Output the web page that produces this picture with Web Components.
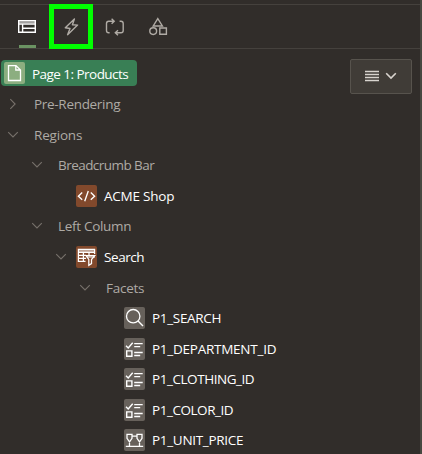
<!DOCTYPE html>
<html lang="en"><head><meta charset="utf-8"><title>Page Designer</title>
<style>html,body{margin:0;background:#312d2a;overflow:hidden}</style></head><body>
<page-panel></page-panel>
<script>
const S='fill="none" stroke="currentColor"';
const ICONS={
 layout:[18,13,`<path ${S} d="M.7 .7h16.6v11.6H.7z M.7 4h16.6 M4.6 4v8 M4.6 8.2h12.5" stroke-width="1.4"/><path ${S} d="M1 2.3h16" stroke-width="1.4" opacity=".55"/>`],
 bolt:[15,18,`<path ${S} stroke-width="1.4" stroke-linejoin="round" d="M10.4 1 1.3 9.8 6 10.5 3.6 16.7 13.6 7.1 8.4 6.8Z"/>`],
 cycle:[20,18,`<path ${S} stroke-width="1.4" d="M4.6 14.8H3.7Q1.5 14.8 1.5 12.6V5.4Q1.5 3.2 3.7 3.2H9 M6.6 .8 9.2 3.2 6.6 5.7 M14.6 3.2H16Q18.2 3.2 18.2 5.4V12.6Q18.2 14.8 16 14.8H10.4 M13 12.3 10.3 14.8 13 17.2"/>`],
 shapes:[20,19,`<path ${S} stroke-width="1.4" d="M8.8 1.6 13.4 9H4.2Z M10.8 11h6.6v6.3h-6.6Z"/><circle ${S} stroke-width="1.4" cx="4.2" cy="14.1" r="3.4"/>`],
 lines:[14,12,`<path ${S} stroke-width="1.4" d="M0 1.5h14M0 4.5h14M0 7.5h14M0 10.5h14"/>`],
 down:[12,8,`<path ${S} stroke-width="var(--sw,1.1)" d="M1.2 1.2 6 6 10.8 1.2"/>`],
 right:[8,12,`<path ${S} stroke-width="1.1" d="M1.3 1.2 6.1 6 1.3 10.8"/>`],
 page:[21,22,`<path ${S} stroke-width="1.3" d="M4.5 3.6h7.5L16.5 8v10.5h-12Z M11.8 3.6V8h4.7"/>`],
 code:[21,22,`<path ${S} stroke-width="1.35" d="M6.2 7.6 2.4 11.2 6.2 14.8 M14.8 7.6 18.6 11.2 14.8 14.8 M12.3 6 8.7 16.3"/>`],
 faceted:[21,22,`<path fill="currentColor" opacity=".5" d="M2 3h17v3H2zM10 9h9v3h-8z"/><path ${S} stroke-width="1.25" d="M9.5 15.4H2.4V3.4H18.6V8 M2.4 6.3H18.6 M2.4 9.3H10 M2.4 12.4H10 M7.4 6.3V15 M13 6.3V9 M10 9.6H18.7L15.5 13.5V17.6L12.8 19.3V13.5Z"/>`],
 search:[21,22,`<circle ${S} stroke-width="1.3" cx="9.2" cy="9.2" r="6.7"/><path ${S} stroke-width="1.4" d="M13.8 13.8 19 19"/>`],
 checks:[21,22,`<path ${S} stroke-width="1.4" d="M2 7.8 4.2 10 8.7 4.8 M10.2 5.6h8.5M10.2 8.6h6 M2.7 12.9h5.2v5.4H2.7Z M10.2 14.5h8.5M10.2 17.5h6"/>`],
 range:[21,22,`<path ${S} stroke-width="1.3" d="M3 5.3H8V9.4L5.5 12.8 3 9.4Z M13 5.3H18V9.4L15.5 12.8 13 9.4Z M8 7.2h5 M1.8 17.4H19.2 M5.5 12.8v4.6 M15.5 12.8v4.6"/>`]
};
function define(name,css,html,after){
 const t=document.createElement('template');
 customElements.define(name,class extends HTMLElement{
  connectedCallback(){if(this.shadowRoot)return;
   t.innerHTML=`<style>${css}</style>${typeof html==='function'?html(this):html}`;
   this.attachShadow({mode:'open'}).append(t.content.cloneNode(true));
   if(after)after(this);}
 });
}
define('ui-icon',':host{display:block;flex:none;line-height:0}svg{display:block}',e=>{
 const [w,h,p]=ICONS[e.getAttribute('name')];
 return `<svg width="${w}" height="${h}" viewBox="0 0 ${w} ${h}">${p}</svg>`;});
define('icon-tile',`:host{display:block;flex:none;width:21px;height:22px;border-radius:2px;color:#fff;background:#67615b}
:host([tone=rust]){background:#82492c}:host([tone=green]){background:#8cae80}`,
 e=>`<ui-icon name="${e.getAttribute('icon')}"></ui-icon>`);
/* Label whose letter-spacing is adjusted so the text takes the width in "fit". */
define('tree-label',':host{display:block;white-space:nowrap;font:13.5px/20px "Open Sans","Noto Sans",sans-serif}span{display:inline-block}','<span><slot></slot></span>',e=>{
 const s=e.shadowRoot.querySelector('span'),n=e.textContent.length;
 s.style.letterSpacing=((+e.getAttribute('fit')+.2-s.getBoundingClientRect().width)/n)+'px';});
define('tree-row',`:host{display:flex;align-items:center;height:30.55px;color:#aeaaa5;box-sizing:border-box}
:host([strong]){color:#fff}.t{flex:none;width:24px;display:flex;justify-content:center;color:#77716b}
icon-tile{margin-left:3px;margin-right:7px}.gap{width:9px;flex:none}`,e=>{
 const a=n=>e.getAttribute(n);
 return `<style>:host{padding-left:${a('level')*24+1}px}</style><div class="t">${a('open')?`<ui-icon name="${a('open')}"></ui-icon>`:''}</div>${a('icon')?`<icon-tile icon="${a('icon')}" tone="${a('tone')||''}"></icon-tile>`:'<div class="gap"></div>'}<tree-label fit="${a('fit')}">${a('label')}</tree-label>`;});
define('root-chip',`:host{display:flex;align-items:center;height:30.5px;padding-left:1px}
div{display:flex;align-items:center;box-sizing:border-box;width:136px;height:26px;padding-left:3px;gap:7px;border-radius:4px;background:#397f55;color:#fff;margin-top:-1px}tree-label{padding-top:1px}`,
 '<div><icon-tile icon="page" tone="green"></icon-tile><tree-label fit="96">Page 1: Products</tree-label></div>');
define('menu-button',`:host{display:flex;align-items:center;justify-content:center;gap:6px;box-sizing:border-box;width:62px;height:35px;border:1px solid #57534d;border-radius:2px;background:#403c37;color:#d8d4ce;--sw:1.6}`,
 '<ui-icon name="lines"></ui-icon><ui-icon name="down"></ui-icon>');
define('tab-item',`:host{display:flex;box-sizing:border-box;width:44px;height:45px;align-items:center;justify-content:center;color:#b0aba5;position:relative}
:host([current]){color:#fff}:host([current])::after{content:"";position:absolute;left:14px;bottom:1px;width:17px;height:3px;background:#6b9362}
:host([marked]){border:5px solid #0f0;}`,e=>`<ui-icon name="${e.getAttribute('icon')}"></ui-icon>`);
define('tab-strip',`:host{display:flex;height:45px;box-sizing:border-box;padding-left:5px;border-top:1px solid #45413d;border-bottom:1px solid #45413d;align-items:center}`,'<slot></slot>');
const rows=[
[0,'right','','','Pre-Rendering',86],[0,'down','','','Regions',48],[1,'down','','','Breadcrumb Bar',96],
[2,'','code','rust','ACME Shop',70],[1,'down','','','Left Column',73],[2,'down','faceted','rust','Search',40],
[3,'down','','','Facets',38],[4,'','search','','P1_SEARCH',69],[4,'','checks','','P1_DEPARTMENT_ID',124],
[4,'','checks','','P1_CLOTHING_ID',102],[4,'','checks','','P1_COLOR_ID',81],[4,'','range','','P1_UNIT_PRICE',91]];
define('page-panel',`:host{display:block;box-sizing:border-box;width:422px;height:454px;padding-top:4px;background:#312d2a;border-right:2px solid #464840;overflow:hidden}
.body{display:flex;justify-content:space-between;align-items:flex-start;padding:9.5px 8px 0 0}.tree{width:340px}`,
`<tab-strip><tab-item icon="layout" current></tab-item><tab-item icon="bolt" marked></tab-item><tab-item icon="cycle"></tab-item><tab-item icon="shapes"></tab-item></tab-strip>
<div class="body"><div class="tree"><root-chip></root-chip>${rows.map(([l,o,i,t,n,w])=>`<tree-row level="${l}" open="${o}" icon="${i}" tone="${t}" label="${n}" fit="${w}" ${i?'strong':''}></tree-row>`).join('')}</div><menu-button></menu-button></div>`);
</script></body></html>
